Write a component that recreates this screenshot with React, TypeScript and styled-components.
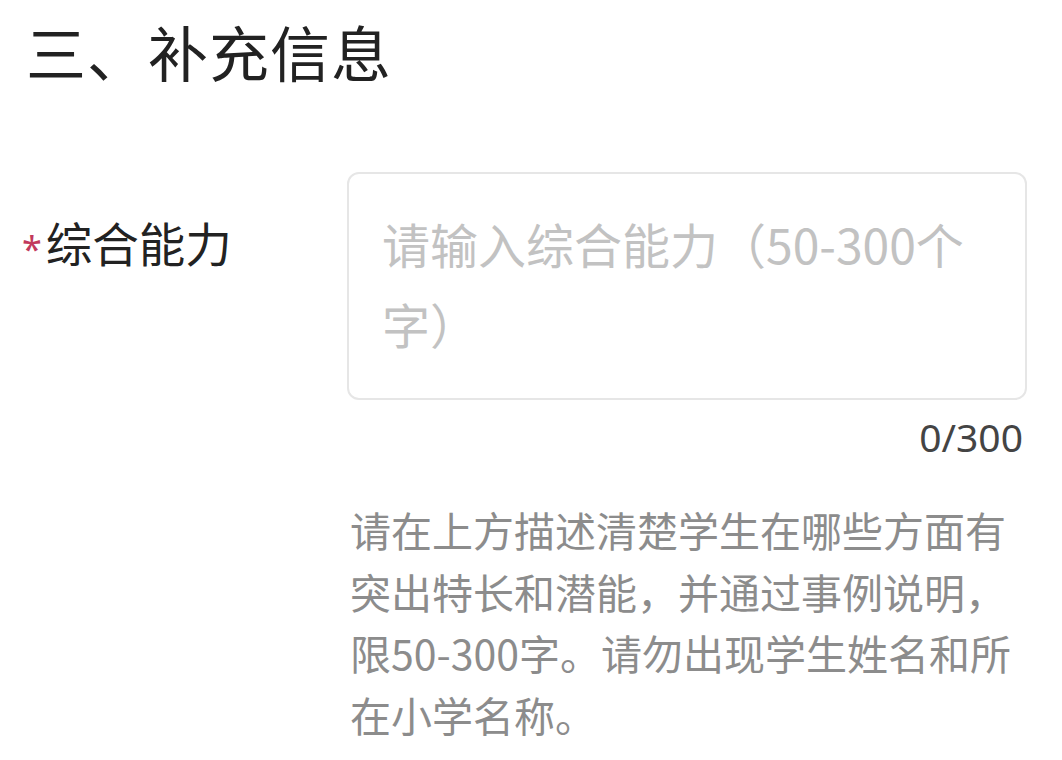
import React from "react";
import styled, { createGlobalStyle } from "styled-components";

const GlobalStyle = createGlobalStyle`
  html, body {
    margin: 0;
    padding: 0;
    background: #fff;
  }
  body {
    font-family: "Noto Sans CJK SC", "Noto Sans", sans-serif;
  }
`;

const Page = styled.div`
  width: 1062px;
  height: 760px;
  box-sizing: border-box;
  padding: 15px 0 0 22px;
  overflow: hidden;
`;

const Title = styled.div`
  font-size: 60px;
  line-height: 72px;
  color: #222;
  padding-left: 4px;
  letter-spacing: 1px;
`;

const FormRow = styled.div`
  display: flex;
  align-items: flex-start;
  margin-top: 85px;
`;

const Label = styled.div`
  width: 325px;
  flex-shrink: 0;
  margin-top: 30px;
  font-size: 46.5px;
  line-height: 80px;
  color: #222;
  white-space: nowrap;
`;

const Star = styled.span`
  color: #c23a5c;
  font-family: "Noto Sans", sans-serif;
  font-size: 36px;
  margin-right: 4px;
`;

const Field = styled.div`
  width: 680px;
  display: flex;
  flex-direction: column;
`;

const TextBox = styled.textarea`
  width: 680px;
  height: 228px;
  box-sizing: border-box;
  border: 2px solid #e6e6e6;
  border-radius: 12px;
  padding: 29px 30px 0 33px;
  font-family: "Noto Sans CJK SC", "Noto Sans", sans-serif;
  font-size: 48px;
  line-height: 80px;
  color: #222;
  resize: none;
  outline: none;
  &::placeholder {
    color: #c2c2c2;
  }
`;

const Counter = styled.div`
  align-self: flex-end;
  margin-top: 12px;
  margin-right: 4px;
  font-family: "Noto Sans", sans-serif;
  font-size: 39px;
  line-height: 50px;
  color: #444;
`;

const Hint = styled.div`
  margin-top: 37px;
  padding-left: 3px;
  font-size: 41px;
  line-height: 61.5px;
  color: #8c8c8c;
  white-space: nowrap;
`;

export default function App() {
  return (
    <>
      <GlobalStyle />
      <Page>
        <Title>三、补充信息</Title>
        <FormRow>
          <Label>
            <Star>*</Star>综合能力
          </Label>
          <Field>
            <TextBox placeholder="请输入综合能力（50-300个字）" />
            <Counter>0/300</Counter>
            <Hint>
              请在上方描述清楚学生在哪些方面有
              <br />
              突出特长和潜能，并通过事例说明，
              <br />
              限50-300字。请勿出现学生姓名和所
              <br />
              在小学名称。
            </Hint>
          </Field>
        </FormRow>
      </Page>
    </>
  );
}
